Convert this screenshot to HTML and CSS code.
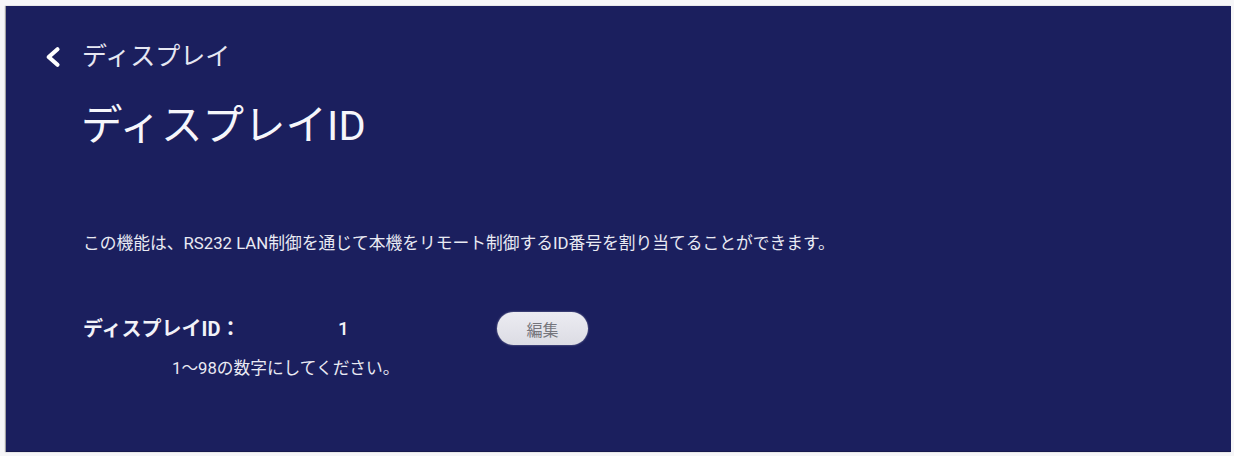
FILE: index.html
```html
<!DOCTYPE html>
<html lang="ja">
<head>
<meta charset="utf-8">
<title>ディスプレイID</title>
<link rel="stylesheet" href="styles.css">
</head>
<body>
<div class="screen">
  <div class="back">
    <svg class="chev" viewBox="0 0 16 20" width="16" height="20" aria-hidden="true">
      <path d="M13 3 L5 10 L13 17" fill="none" stroke="#ffffff" stroke-width="3.8" stroke-linecap="round" stroke-linejoin="round"/>
    </svg>
    <span class="back-text">ディスプレイ</span>
  </div>
  <h1 class="title">ディスプレイID</h1>
  <p class="desc">この機能は、RS232 LAN制御を通じて本機をリモート制御するID番号を割り当てることができます。</p>
  <div class="row">
    <span class="label">ディスプレイID：</span>
    <span class="value">1</span>
    <button class="edit">編集</button>
  </div>
  <p class="hint">1～98の数字にしてください。</p>
</div>
</body>
</html>
```

FILE: styles.css
```css
html, body {
  margin: 0;
  padding: 0;
}
body {
  background: #f6f6f8;
  width: 1234px;
  height: 456px;
  overflow: hidden;
  font-family: Roboto, "Noto Sans CJK JP", sans-serif;
}
.screen {
  margin: 6px 3px 0 6px;
  height: 446px;
  box-sizing: border-box;
  background: #1b1f5e;
  padding: 35px 0 0 75px;
  color: #f2f2f8;
  box-shadow: -1px 0 1px rgba(0,0,0,0.35);
  border-bottom: 1px solid #16194d;
}
.back {
  display: flex;
  align-items: center;
  height: 32px;
  margin-left: -38px;
}
.chev {
  width: 18px;
  height: 22px;
  margin-right: 21px;
}
.back-text {
  font-size: 25px;
  line-height: 32px;
  color: #e6e7f2;
}
.title {
  margin: 28px 0 0 0;
  font-size: 41.5px;
  line-height: 50px;
  font-weight: 400;
  color: #f6f6fb;
}
.desc {
  margin: 80px 0 0 2px;
  font-size: 16.75px;
  line-height: 24px;
  color: #e9eaf3;
}
.row {
  display: flex;
  align-items: center;
  height: 33px;
  margin: 57px 0 0 2px;
}
.label {
  width: 255px;
  font-size: 20px;
  font-weight: 700;
  line-height: 24px;
  color: #f2f2f8;
}
.value {
  width: 159px;
  font-size: 19px;
  font-weight: 500;
  line-height: 24px;
}
.edit {
  width: 91px;
  height: 33px;
  border: none;
  border-radius: 17px;
  background: linear-gradient(#ececf2, #dcdce4);
  color: #75757c;
  font-family: "Noto Sans CJK JP", sans-serif;
  font-size: 16px;
  padding: 0;
  box-shadow: 0 0 2px rgba(255,255,255,0.5);
}
.hint {
  margin: 13px 0 0 91px;
  font-size: 16.7px;
  line-height: 22px;
  color: #eaeaf3;
}
```
